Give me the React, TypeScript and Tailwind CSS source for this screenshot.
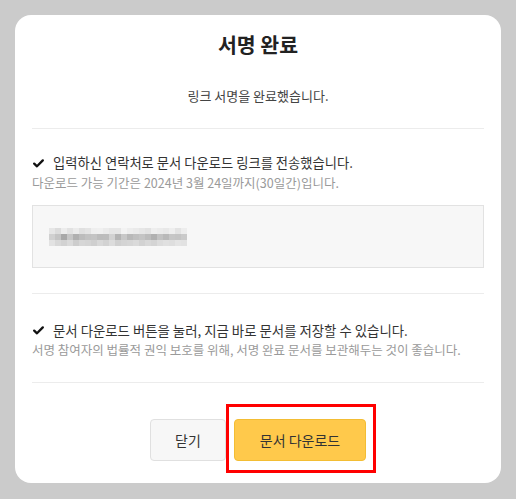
import React from 'react';

const mosaic = [
  ['#e6e6e6', '#dcdcdc', '#ececec', '#e2e2e2', '#ebebeb', '#e0e0e0', '#e4e4e4', '#efefef', '#f0f0f0', '#ebebeb', '#e6e6e6', '#e6e6e6', '#f3f3f3', '#ededed', '#eaeaea', '#e6e6e6', '#e2e2e2', '#eeeeee', '#ebebeb', '#e8e8e8', '#eeeeee', '#e3e3e3', '#ededed'],
  ['#d0d0d0', '#c4c4c4', '#a8a8a8', '#c6c6c6', '#b0b0b0', '#bcbcbc', '#c2c2c2', '#c4c4c4', '#bcbcbc', '#bdbdbd', '#d2d2d2', '#b4b4b4', '#c8c8c8', '#b8b8b8', '#bfbfbf', '#c4c4c4', '#bcbcbc', '#b0b0b0', '#c2c2c2', '#b9b9b9', '#c6c6c6', '#c4c4c4', '#cacaca'],
  ['#e2e2e2', '#d8d8d8', '#d2d2d2', '#dadada', '#cdcdcd', '#d6d6d6', '#d4d4d4', '#cfcfcf', '#d8d8d8', '#d2d2d2', '#dcdcdc', '#d0d0d0', '#d4d4d4', '#d6d6d6', '#dadada', '#d2d2d2', '#d8d8d8', '#d4d4d4', '#dcdcdc', '#e0e0e0', '#dedede', '#e4e4e4', '#e2e2e2'],
];

function BlurredContact() {
  return (
    <svg width="138" height="18" viewBox="0 0 138 18" className="block">
      {mosaic.map((row, r) =>
        row.map((c, i) => <rect key={`${r}-${i}`} x={i * 6} y={r * 6} width="6" height="6" fill={c} />)
      )}
    </svg>
  );
}

function Check() {
  return (
    <svg width="11" height="9" viewBox="0 0 11 9" className="shrink-0">
      <path d="M1.2 4.6 L4 7.3 L9.8 1.4" fill="none" stroke="#111" strokeWidth="2.3" strokeLinecap="round" strokeLinejoin="round" />
    </svg>
  );
}

export default function App() {
  return (
    <div
      className="min-h-screen bg-[#cbcbcb] pt-[15px] px-[15px]"
      style={{ fontFamily: '"Noto Sans CJK KR", "Noto Sans", sans-serif' }}
    >
      <div className="bg-white rounded-[16px] px-[17px] pt-[15px] pb-[22px] h-[468px]">
        <h1 className="text-center text-[20.5px] leading-[28px] font-bold text-[#222]">서명 완료</h1>
        <p className="mt-[28px] text-center text-[13px] leading-[20px] text-[#444]">링크 서명을 완료했습니다.</p>

        <div className="mt-[22px] border-t border-[#ececec] pt-[24px]">
          <div className="flex items-center gap-[9px] pl-[1px] text-[13.3px] leading-[20px] text-[#333]">
            <Check />
            <span>입력하신 연락처로 문서 다운로드 링크를 전송했습니다.</span>
          </div>
          <p className="text-[12.5px] leading-[20px] text-[#9a9a9a]">다운로드 가능 기간은 2024년 3월 24일까지(30일간)입니다.</p>
          <div className="mt-[12px] h-[63px] bg-[#f7f7f7] border border-[#e2e2e2] flex items-center pl-[16px]">
            <BlurredContact />
          </div>
        </div>

        <div className="mt-[25px] border-t border-[#ececec] pt-[26px] pb-[23px]">
          <div className="flex items-center gap-[9px] pl-[1px] text-[13.4px] leading-[20px] text-[#333]">
            <Check />
            <span>문서 다운로드 버튼을 눌러, 지금 바로 문서를 저장할 수 있습니다.</span>
          </div>
          <p className="text-[12.5px] leading-[19px] text-[#9a9a9a]">서명 참여자의 법률적 권익 보호를 위해, 서명 완료 문서를 보관해두는 것이 좋습니다.</p>
        </div>

        <div className="border-t border-[#ececec] pt-[36px] flex justify-center gap-[8px]">
          <button className="w-[76px] h-[42px] rounded-[4px] bg-[#f7f7f7] border border-[#e0e0e0] text-[14px] text-[#333]">
            닫기
          </button>
          <div className="relative">
            <button className="w-[132px] h-[42px] rounded-[4px] bg-[#ffc94b] border border-[#f3bd34] text-[14px] text-[#333]">
              문서 다운로드
            </button>
            <div className="absolute left-[-8px] right-[-10px] top-[-15px] bottom-[-12px] border-[3px] border-[#ff0000] pointer-events-none" />
          </div>
        </div>
      </div>
    </div>
  );
}
